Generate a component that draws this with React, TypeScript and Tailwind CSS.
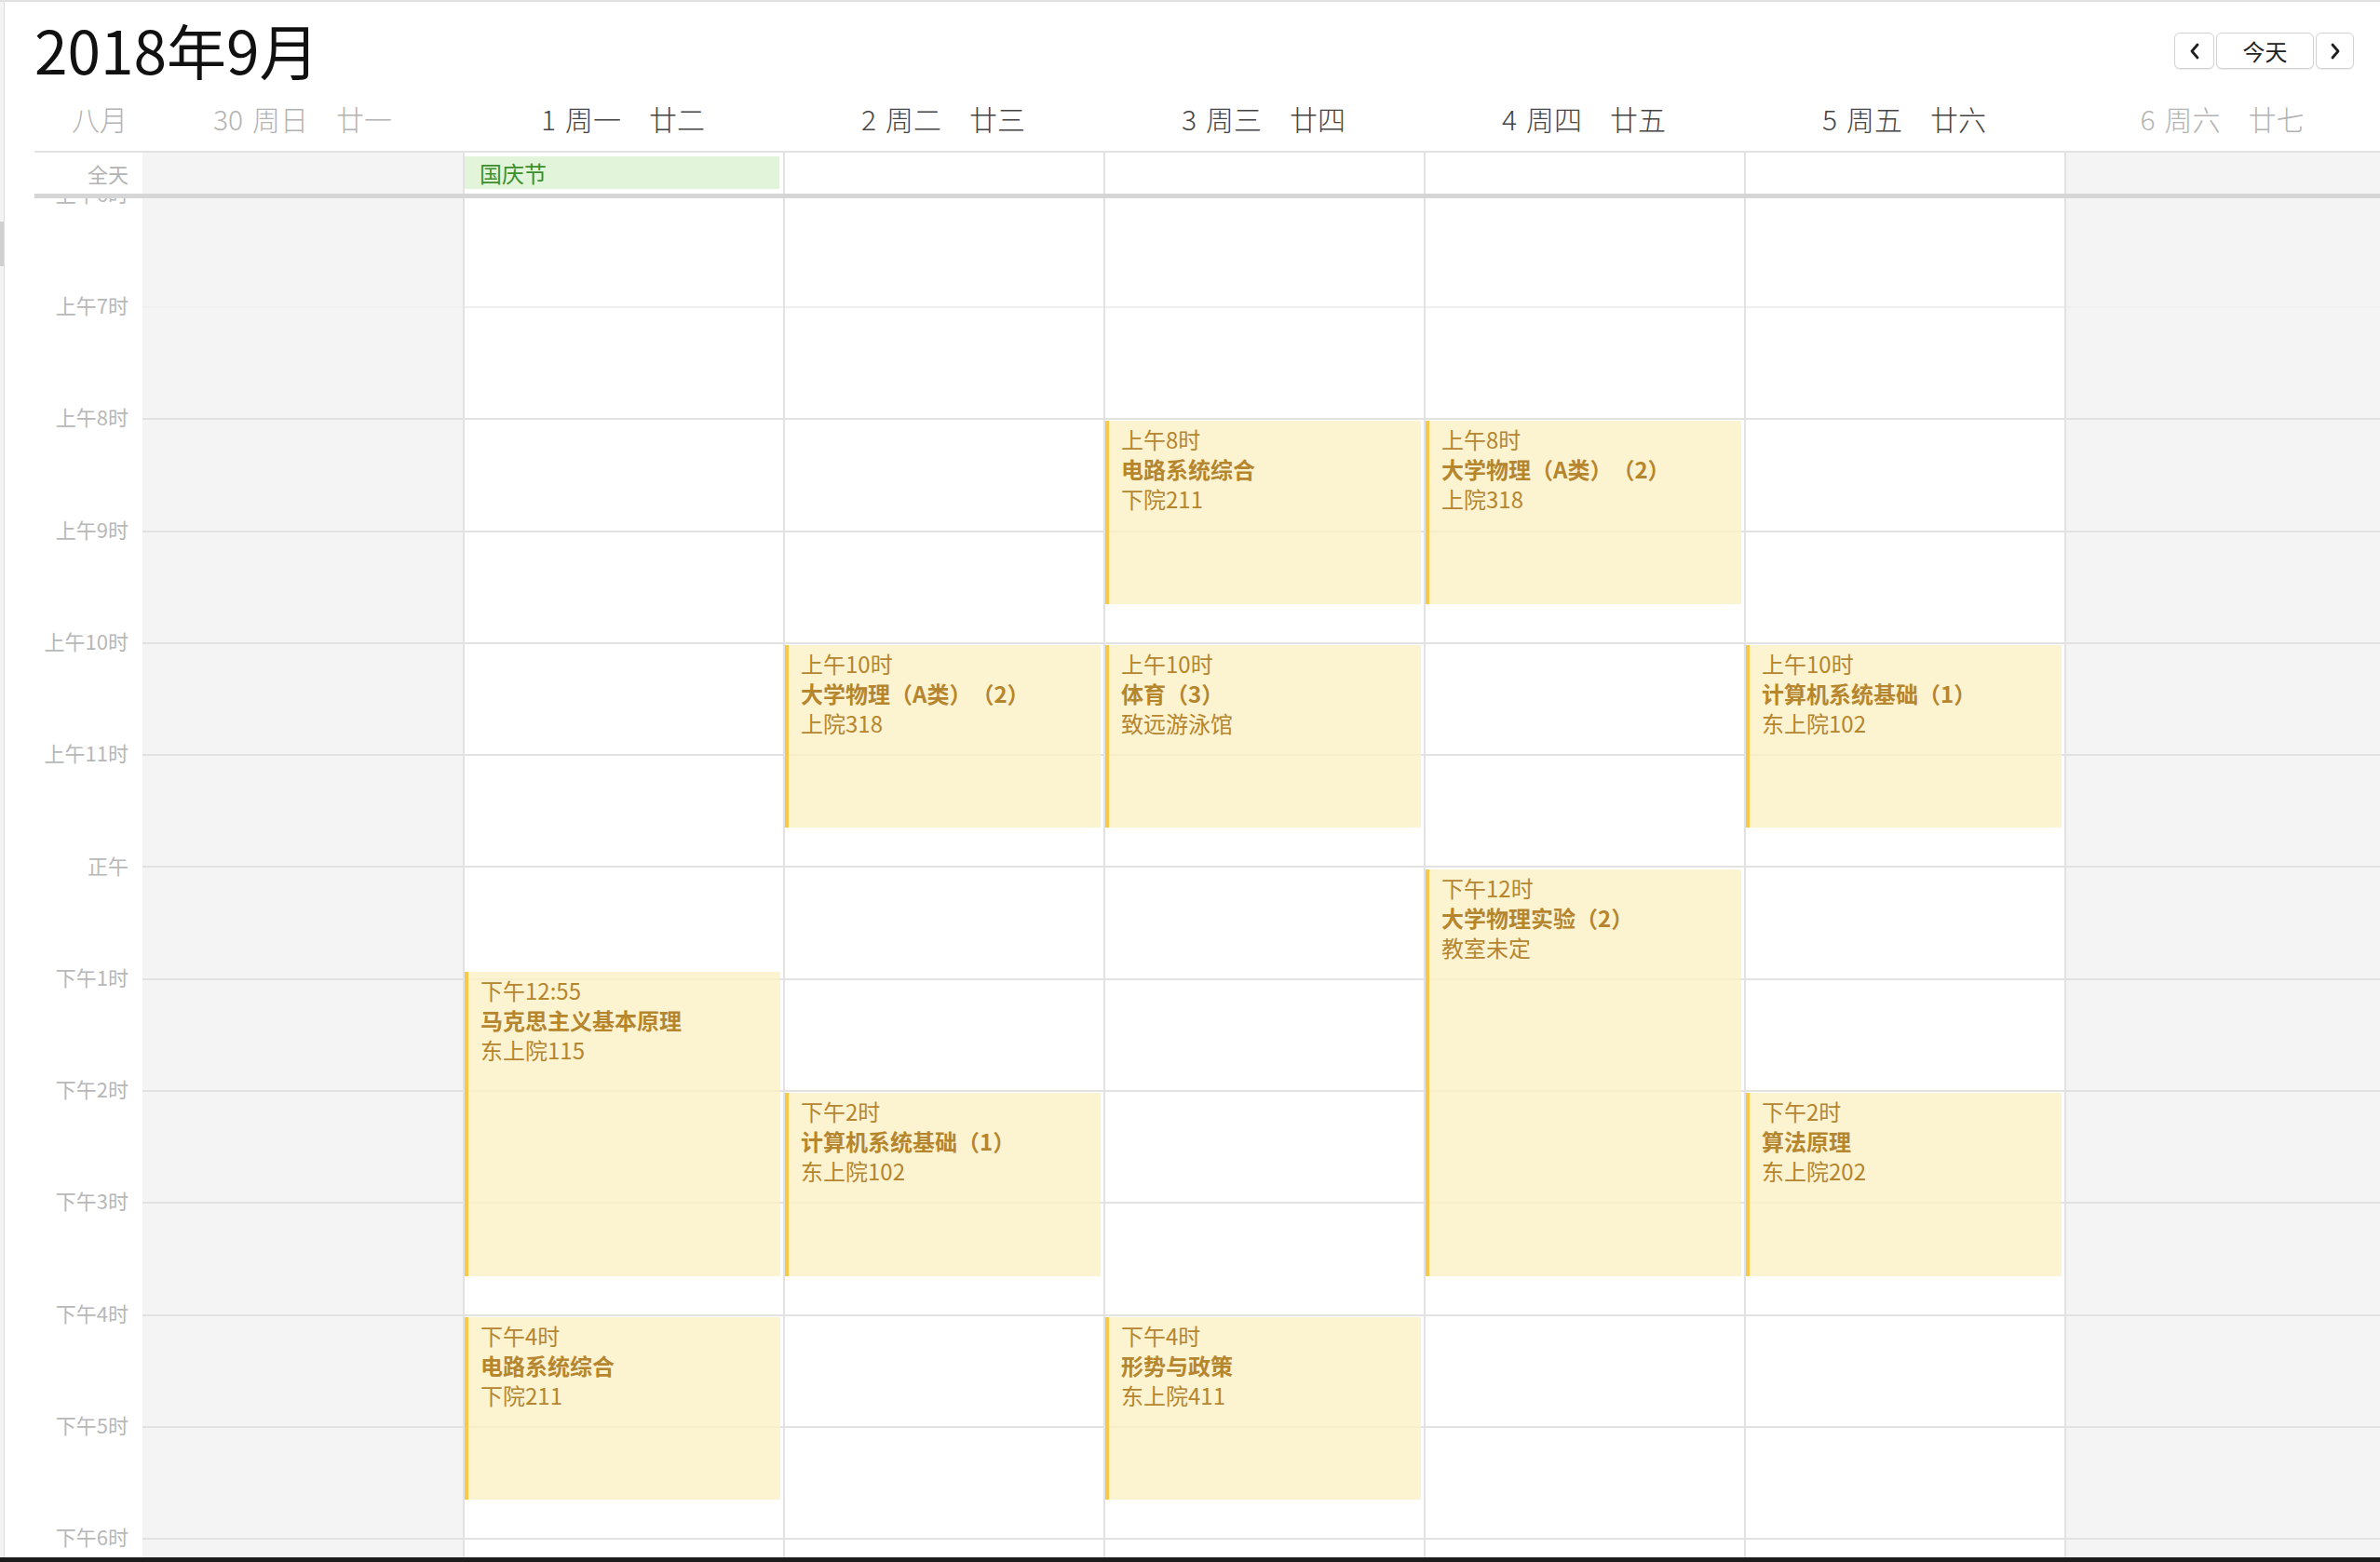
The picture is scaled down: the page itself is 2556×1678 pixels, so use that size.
import clsx from 'clsx'

const HOUR = 120.3
const START_HOUR = 6
const HOURS = Array.from({ length: 14 }, (_, i) => START_HOUR + i)

const days = [
  { num: '30', week: '周日', lunar: '廿一', weekend: true },
  { num: '1', week: '周一', lunar: '廿二', weekend: false },
  { num: '2', week: '周二', lunar: '廿三', weekend: false },
  { num: '3', week: '周三', lunar: '廿四', weekend: false },
  { num: '4', week: '周四', lunar: '廿五', weekend: false },
  { num: '5', week: '周五', lunar: '廿六', weekend: false },
  { num: '6', week: '周六', lunar: '廿七', weekend: true },
]

type Course = {
  day: number
  start: number
  end: number
  time: string
  title: string
  room: string
}

const m = (h: number, min = 0) => h * 60 + min

const courses: Course[] = [
  { day: 1, start: m(12, 55), end: m(15, 40), time: '下午12:55', title: '马克思主义基本原理', room: '东上院115' },
  { day: 1, start: m(16), end: m(17, 40), time: '下午4时', title: '电路系统综合', room: '下院211' },
  { day: 2, start: m(10), end: m(11, 40), time: '上午10时', title: '大学物理（A类）（2）', room: '上院318' },
  { day: 2, start: m(14), end: m(15, 40), time: '下午2时', title: '计算机系统基础（1）', room: '东上院102' },
  { day: 3, start: m(8), end: m(9, 40), time: '上午8时', title: '电路系统综合', room: '下院211' },
  { day: 3, start: m(10), end: m(11, 40), time: '上午10时', title: '体育（3）', room: '致远游泳馆' },
  { day: 3, start: m(16), end: m(17, 40), time: '下午4时', title: '形势与政策', room: '东上院411' },
  { day: 4, start: m(8), end: m(9, 40), time: '上午8时', title: '大学物理（A类）（2）', room: '上院318' },
  { day: 4, start: m(12), end: m(15, 40), time: '下午12时', title: '大学物理实验（2）', room: '教室未定' },
  { day: 5, start: m(10), end: m(11, 40), time: '上午10时', title: '计算机系统基础（1）', room: '东上院102' },
  { day: 5, start: m(14), end: m(15, 40), time: '下午2时', title: '算法原理', room: '东上院202' },
]

const y = (min: number) => (min / 60 - START_HOUR) * HOUR

const hourLabel = (h: number) => (h < 12 ? `上午${h}时` : h === 12 ? '正午' : `下午${h - 12}时`)

const Chevron = ({ dir }: { dir: 'left' | 'right' }) => (
  <svg width="14" height="20" viewBox="0 0 14 20" fill="none">
    <path
      d={dir === 'left' ? 'M10 3 L4 10 L10 17' : 'M4 3 L10 10 L4 17'}
      stroke="#1f1f1f"
      strokeWidth="2.8"
      strokeLinecap="round"
      strokeLinejoin="round"
    />
  </svg>
)

const btn =
  'h-[39px] flex items-center justify-center bg-white border-[1.5px] border-[#d2d2d2] rounded-[6px] shadow-[0_1px_1px_rgba(0,0,0,0.08)]'

const cols = 'grid grid-cols-[116px_repeat(6,344px)_1fr]'

const App = () => {
  return (
    <div className="w-[2556px] h-[1678px] flex flex-col overflow-hidden bg-white border-t-2 border-[#e0e0e0] font-['Noto_Sans_CJK_SC',sans-serif] [text-spacing-trim:space-all]">
      <div className="flex flex-1 min-h-0">
        {/* window edge + scrollbar sliver */}
        <div className="w-[5px] shrink-0 bg-[#f4f4f4] border-r border-[#dcdcdc] flex flex-col">
          <div className="h-[236px]" />
          <div className="h-[48px] bg-[#d0d0d0] w-[4px]" />
        </div>

        <div className="flex-1 flex flex-col pl-[32px] min-w-0">
          {/* title bar */}
          <div className="h-[96px] shrink-0 flex items-start justify-between pt-[18px] pr-[28px]">
            <h1 className="text-[64px] leading-[64px] text-[#111] font-normal">2018年9月</h1>
            <div className="flex gap-[2px] mt-[15px]">
              <button className={clsx(btn, 'w-[43px]')}>
                <Chevron dir="left" />
              </button>
              <button className={clsx(btn, 'w-[105px] text-[24px] text-[#222]')}>今天</button>
              <button className={clsx(btn, 'w-[41px]')}>
                <Chevron dir="right" />
              </button>
            </div>
          </div>

          {/* day header */}
          <div className={clsx(cols, 'h-[66px] shrink-0 border-b-2 border-[#e2e2e2]')}>
            <div className="pt-[14px] pr-[16px] text-right text-[30px] leading-[30px] text-[#b3b3b3] font-light">八月</div>
            {days.map((d) => (
              <div
                key={d.num}
                className={clsx(
                  'pt-[14px] flex justify-center text-[30px] leading-[30px] font-light',
                  d.weekend ? 'text-[#b3b3b3]' : 'text-[#444]'
                )}
              >
                <span>{d.num}</span>
                <span className="ml-[10px]">{d.week}</span>
                <span className="ml-[30px]">{d.lunar}</span>
              </div>
            ))}
          </div>

          {/* all-day row */}
          <div className={clsx(cols, 'h-[44px] shrink-0')}>
            <div className="flex items-center justify-end pr-[15px] text-[22px] text-[#b3b3b3]">全天</div>
            {days.map((d, i) => (
              <div
                key={d.num}
                className={clsx(i > 0 && 'border-l-2 border-[#e2e2e2]', d.weekend && 'bg-[#f4f4f4]')}
              >
                {i === 1 && (
                  <div className="mt-[4px] mr-[4px] h-[35px] bg-[#e2f5da] pl-[16px] flex items-center text-[24px] text-[#3b8f2c]">
                    国庆节
                  </div>
                )}
              </div>
            ))}
          </div>

          <div className="h-[5px] shrink-0 bg-[#d6d6d6]" />

          {/* time grid */}
          <div className="flex-1 min-h-0 overflow-hidden">
            <div className="flex mt-[-4.3px]">
              <div className="relative w-[116px] shrink-0">
                {HOURS.map((h) => (
                  <div
                    key={h}
                    className="absolute right-[15px] -translate-y-1/2 text-[22px] leading-[24px] text-[#b8b8b8] whitespace-nowrap"
                    style={{ top: y(h * 60) - 2 }}
                  >
                    {hourLabel(h)}
                  </div>
                ))}
              </div>
              <div className="flex-1 grid grid-cols-[repeat(6,344px)_1fr]">
                {days.map((d, i) => (
                  <div
                    key={d.num}
                    className={clsx('relative', i > 0 && 'border-l-2 border-[#e2e2e2]', d.weekend && 'bg-[#f4f4f4]')}
                  >
                    {HOURS.map((h) => (
                      <div
                        key={h}
                        className={clsx('h-[120.3px] border-t-2', h < 8 ? 'border-[#efefef]' : 'border-[#e2e2e2]')}
                      />
                    ))}
                    {courses
                      .filter((c) => c.day === i)
                      .map((c) => (
                        <div
                          key={c.title + c.start}
                          className="absolute left-0 right-[3px] bg-[#fbf0c6cc] border-l-4 border-[#f7c94a] pl-[13px] pt-[4px] text-[24px] leading-[32px] text-[#b5862e] overflow-hidden"
                          style={{ top: y(c.start) + 3, height: y(c.end) - y(c.start) - 4 }}
                        >
                          <div>{c.time}</div>
                          <div className="font-semibold">{c.title}</div>
                          <div>{c.room}</div>
                        </div>
                      ))}
                  </div>
                ))}
              </div>
            </div>
          </div>
        </div>
      </div>
      <div className="h-[5px] shrink-0 bg-[#1c1c1c]" />
    </div>
  )
}

export default App
